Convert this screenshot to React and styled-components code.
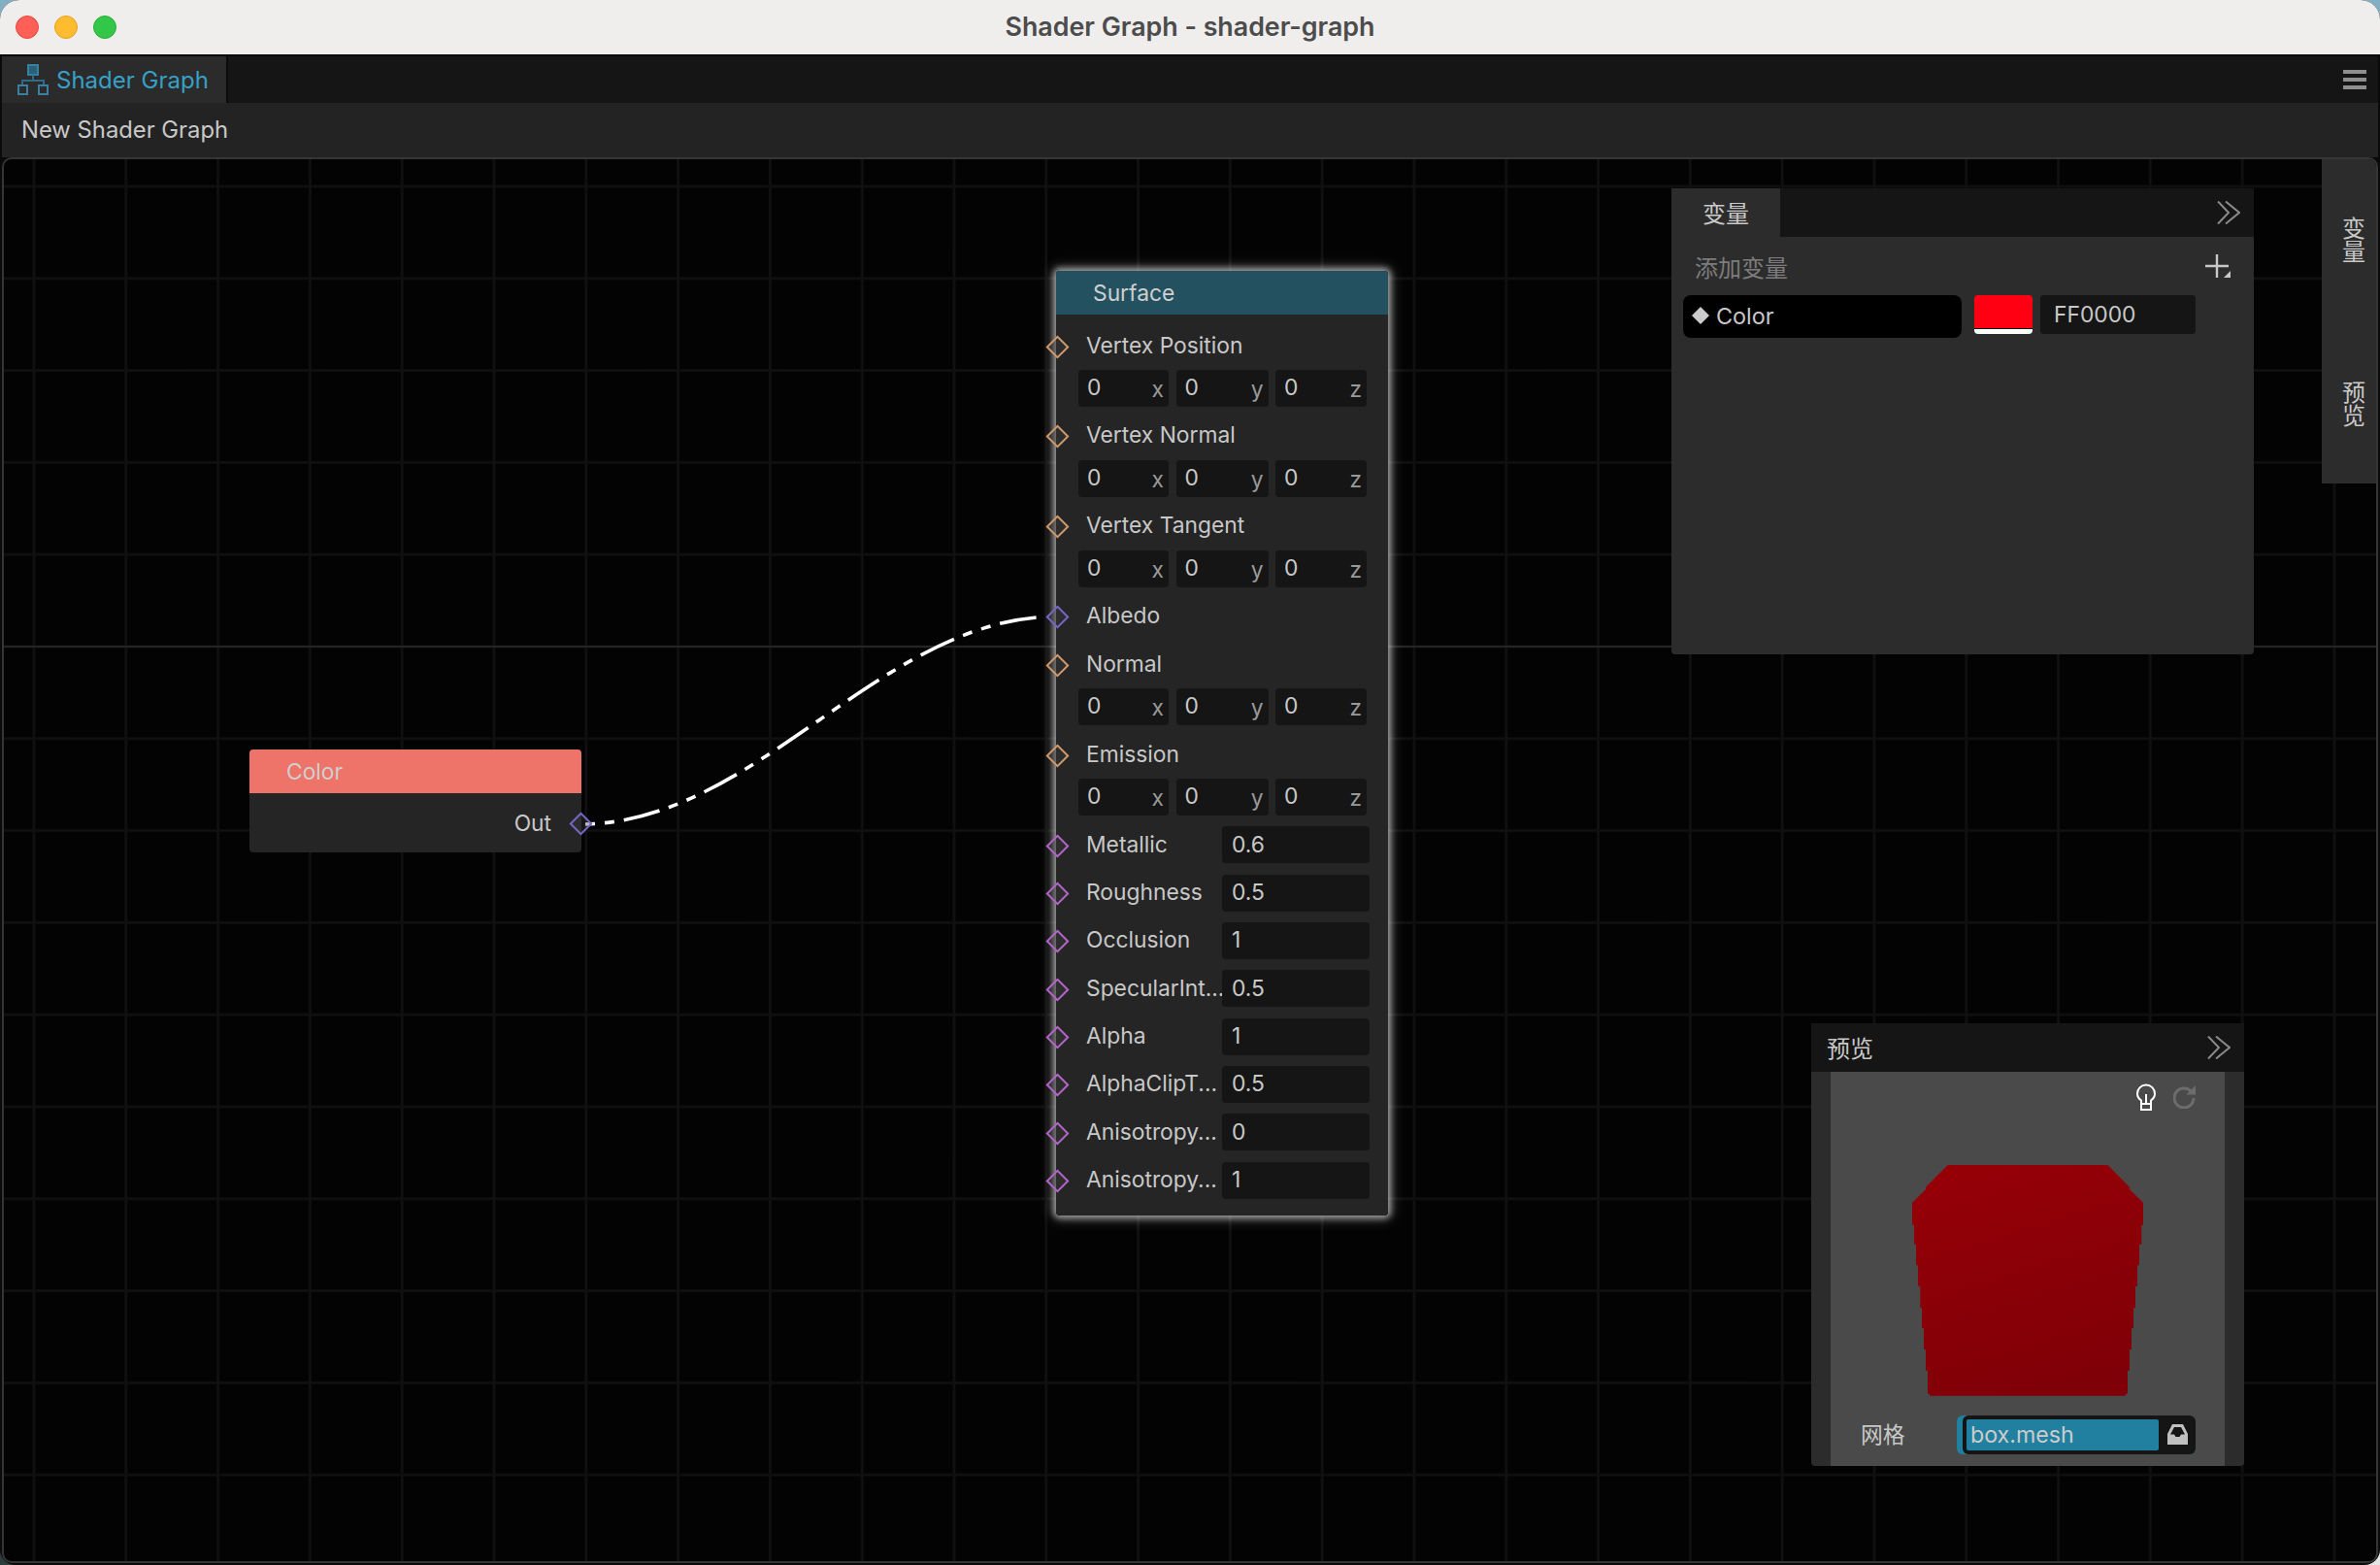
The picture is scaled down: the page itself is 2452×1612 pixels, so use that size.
import React from "react";
import styled, { createGlobalStyle } from "styled-components";

const SANS = `Inter, "Noto Sans CJK SC", sans-serif`;

const GlobalStyle = createGlobalStyle`
  html, body {
    margin: 0;
    padding: 0;
    height: 100%;
    background:
      linear-gradient(to right, #2c3c3a 50%, #e4e6e6 50%) bottom / 100% 50% no-repeat,
      #83aec4;
  }
  * { box-sizing: border-box; }
`;

const Window = styled.div`
  width: 2452px;
  height: 1612px;
  display: flex;
  flex-direction: column;
  background: #0a0a0a;
  border-radius: 20px 20px 16px 16px;
  overflow: hidden;
  font-family: ${SANS};
  font-size: 22.8px;
  color: #c8c8c8;
`;

const TitleBar = styled.div`
  height: 56px;
  flex: none;
  display: grid;
  grid-template-columns: 1fr auto 1fr;
  align-items: center;
  background: #efeeec;
  padding: 0 16px;
`;

const Lights = styled.div`
  display: flex;
  gap: 16px;
`;

const Light = styled.span`
  width: 24px;
  height: 24px;
  border-radius: 50%;
  background: ${(p) => p.$color};
  border: 1px solid ${(p) => p.$edge};
`;

const Title = styled.div`
  font-size: 26.8px;
  font-weight: 600;
  color: #4c4c4c;
  margin-bottom: 2px;
`;

const Workspace = styled.div`
  flex: 1;
  min-height: 0;
  display: flex;
  flex-direction: column;
  padding: 2px;
`;

const TabBar = styled.div`
  height: 48px;
  flex: none;
  display: flex;
  justify-content: space-between;
  align-items: center;
  background: #151515;
  padding-right: 12px;
`;

const Tab = styled.div`
  width: 233px;
  height: 100%;
  display: flex;
  align-items: center;
  gap: 8px;
  padding-left: 16px;
  background: #2b2b2b;
  border-right: 2px solid #0a0a0a;
  color: #38a0c6;
  font-size: 24px;
`;

const Burger = styled.div`
  display: flex;
  flex-direction: column;
  gap: 4px;
  span {
    width: 24px;
    height: 4px;
    background: #8e8e8e;
  }
`;

const Toolbar = styled.div`
  height: 56px;
  flex: none;
  display: flex;
  align-items: center;
  padding: 0 0 2px 20px;
  background: #232323;
  font-size: 23.8px;
`;

const Canvas = styled.div`
  flex: 1;
  min-height: 0;
  position: relative;
  overflow: hidden;
  border: 2px solid #353535;
  border-radius: 10px;
  background-color: #030303;
  background-image:
    linear-gradient(#242424, #242424),
    linear-gradient(to right, #0a0a0a 0, #121212 1px, #121212 2px, #0a0a0a 3px, transparent 3px),
    linear-gradient(to bottom, #0a0a0a 0, #111 1px, #111 2px, #0a0a0a 3px, transparent 3px);
  background-size: 100% 2px, 94.8px 94.8px, 94.8px 94.8px;
  background-position: 0 500.500px, 29.500px 26.500px, 29.500px 26.500px;
  background-repeat: no-repeat, repeat, repeat;
`;

const WireLayer = styled.svg`
  position: absolute;
  left: 0;
  top: 0;
`;

const Node = styled.div`
  position: absolute;
  left: ${(p) => p.$x}px;
  top: ${(p) => p.$y}px;
  width: 342px;
  height: ${(p) => p.$h}px;
  border-radius: 4px;
  background: rgba(38, 38, 38, 0.97);
  ${(p) => p.$selected && "box-shadow: 0 0 6px 3px rgba(255,255,255,.55), 0 0 14px 5px rgba(255,255,255,.2);"}
`;

const NodeHead = styled.div`
  height: 45px;
  display: flex;
  align-items: center;
  padding-left: ${(p) => p.$indent}px;
  border-radius: 4px 4px 0 0;
  background: ${(p) => p.$color};
  color: #cfcfcf;
`;

const NodeBody = styled.div`
  display: flex;
  flex-direction: column;
  gap: 11.33px;
  padding-top: 13px;
`;

const Block = styled.div`
  display: flex;
  flex-direction: column;
  gap: 5.67px;
`;

const Row = styled.div`
  position: relative;
  height: 38px;
  display: flex;
  align-items: center;
  padding-left: 31px;
`;

const Label = styled.span`
  width: 140px;
  flex: none;
  white-space: nowrap;
  margin-bottom: 2px;
`;

const Socket = styled.i`
  position: absolute;
  top: 50%;
  ${(p) => (p.$out ? "right: -7.5px;" : "left: -7.5px;")}
  width: 17px;
  height: 17px;
  margin-top: -7.5px;
  transform: rotate(45deg);
  border: 2px solid ${(p) => p.$color};
  background: rgba(60, 60, 60, 0.35);
`;

const VecRow = styled.div`
  height: 38px;
  margin-left: 23px;
  width: 297px;
  display: grid;
  grid-template-columns: 93px 95px 94px;
  gap: 7.5px;
`;

const Field = styled.div`
  height: 38px;
  display: flex;
  justify-content: space-between;
  align-items: center;
  padding: 0 5px 2px ${(p) => (p.$wide ? "10px" : "9px")};
  border-radius: 4px;
  background: #151515;
  width: ${(p) => (p.$wide ? "152px" : "auto")};
`;

const Axis = styled.span`
  color: #999;
  margin-top: 4px;
`;

const OutRow = styled.div`
  position: relative;
  height: 61px;
  display: flex;
  justify-content: flex-end;
  align-items: center;
  padding-right: 31px;
`;

const SideBar = styled.div`
  position: absolute;
  right: 0;
  top: 0;
  width: 56px;
  height: 334px;
  display: flex;
  flex-direction: column;
  gap: 4px;
  background: #2c2c2c;
`;

const SideTab = styled.div`
  height: 165px;
  display: flex;
  justify-content: center;
  align-items: center;
  padding-left: 6px;
  writing-mode: vertical-rl;
  text-orientation: upright;
  font-size: 24px;
`;

const Panel = styled.div`
  position: absolute;
  left: ${(p) => p.$x}px;
  top: ${(p) => p.$y}px;
  width: ${(p) => p.$w}px;
  height: ${(p) => p.$h}px;
  display: flex;
  flex-direction: column;
  background: #2c2c2c;
  border-radius: 0 0 4px 4px;
`;

const PanelHead = styled.div`
  height: 50px;
  flex: none;
  display: flex;
  justify-content: space-between;
  align-items: center;
  padding-right: 14px;
  background: #151515;
`;

const PanelTab = styled.div`
  width: 112px;
  height: 100%;
  display: flex;
  justify-content: center;
  align-items: center;
  padding-bottom: 2px;
  font-size: 24px;
  background: #2c2c2c;
`;

const PanelTitle = styled.div`
  padding: 0 0 2px 16px;
  font-size: 24px;
`;

const AddRow = styled.div`
  height: 60px;
  display: flex;
  justify-content: space-between;
  align-items: center;
  padding: 0 24px 0 24px;
  font-size: 24px;
  color: #7c7c7c;
`;

const VarRow = styled.div`
  display: flex;
  padding-left: 12px;
`;

const VarName = styled.div`
  width: 287px;
  height: 44px;
  display: flex;
  align-items: center;
  gap: 7px;
  padding: 0 0 2px 9px;
  border-radius: 8px;
  font-size: 23.4px;
  background: #000;
`;

const Diamond = styled.span`
  width: 18px;
  height: 18px;
  background: #ccc;
  clip-path: polygon(50% 0, 100% 50%, 50% 100%, 0 50%);
`;

const Swatch = styled.div`
  width: 60px;
  height: 40px;
  margin-left: 13px;
  border-radius: 4px;
  overflow: hidden;
  background: linear-gradient(#ff0012 34px, #000 34px, #000 35.5px, #fff 35.5px);
`;

const HexInput = styled.div`
  width: 160px;
  height: 40px;
  margin-left: 8px;
  display: flex;
  align-items: center;
  padding: 0 0 2px 14px;
  border-radius: 4px;
  background: #151515;
`;

const PreviewBody = styled.div`
  flex: 1;
  min-height: 0;
  margin: 0 20px;
  display: flex;
  flex-direction: column;
  background: #4a4a4a;
`;

const PreviewTools = styled.div`
  height: 96px;
  flex: none;
  display: flex;
  justify-content: flex-end;
  align-items: flex-start;
  gap: 18px;
  padding: 12px 30px 0 0;
`;

const Cube = styled.svg`
  display: block;
  flex: none;
  margin-left: 84px;
`;

const MeshRow = styled.div`
  display: flex;
  align-items: center;
  margin-top: 20px;
  padding-left: 31px;
`;

const MeshLabel = styled.span`
  width: 99px;
  flex: none;
  padding-bottom: 2px;
`;

const MeshPicker = styled.div`
  width: 246px;
  height: 40px;
  display: flex;
  align-items: center;
  border-radius: 6px;
  background: #21809f;
`;

const MeshInner = styled.div`
  flex: 1;
  height: 40px;
  margin-left: 6px;
  display: flex;
  align-items: center;
  justify-content: space-between;
  padding: 4px 8px 4px 4px;
  border-radius: 6px;
  background: #151515;
`;

const MeshName = styled.div`
  width: 198px;
  height: 32px;
  display: flex;
  align-items: center;
  padding-left: 4px;
  border-radius: 2px;
  background: #21809f;
  font-size: 23.200px;
  color: #ccc;
`;

const ORANGE = "#cf9a6b";
const BLUE = "#7568c6";
const PURPLE = "#b465c9";

const surfaceInputs = [
  { name: "Vertex Position", vec: true },
  { name: "Vertex Normal", vec: true },
  { name: "Vertex Tangent", vec: true },
  { name: "Albedo", color: BLUE },
  { name: "Normal", vec: true },
  { name: "Emission", vec: true },
  { name: "Metallic", value: "0.6" },
  { name: "Roughness", value: "0.5" },
  { name: "Occlusion", value: "1" },
  { name: "SpecularInt...", value: "0.5" },
  { name: "Alpha", value: "1" },
  { name: "AlphaClipT...", value: "0.5" },
  { name: "Anisotropy...", value: "0" },
  { name: "Anisotropy...", value: "1" },
];

const HierarchyIcon = () => (
  <svg width="32" height="32" viewBox="0 0 32 32" fill="none" stroke="#37809f" strokeWidth="2">
    <rect x="11" y="1" width="10" height="10" fill="#2a6079" />
    <path d="M16 11v6M5 22v-5h22v5" stroke="#2f6a86" />
    <rect x="1" y="22" width="9" height="9" />
    <rect x="22" y="22" width="9" height="9" />
  </svg>
);

const Chevrons = () => (
  <svg width="24" height="24" viewBox="0 0 24 24" fill="none" stroke="#8a8a8a" strokeWidth="2">
    <path d="M1 .5 12 12 1 23.5M9 .5 23 12 9 23.5" />
  </svg>
);

const PlusIcon = () => (
  <svg width="26" height="24" viewBox="0 0 26 24">
    <path d="M12 0v24M0 12h24" stroke="#c8c8c8" strokeWidth="2.4" />
    <path d="M26 17v7h-7z" fill="#c8c8c8" />
  </svg>
);

const BulbIcon = () => (
  <svg width="20" height="28" viewBox="0 0 20 28" fill="none" stroke="#fff" strokeWidth="2">
    <path d="M5 21v-3.500C2.600 15.800 1 13.800 1 10.500a9 9 0 0 1 18 0c0 3.300-1.600 5.300-4 7V21" />
    <path d="M10 11v10M5 21h10v6H5z" />
  </svg>
);

const ReloadIcon = () => (
  <svg width="23" height="24" viewBox="0 0 23 24" fill="none" style={{ marginTop: 2 }}>
    <path d="M18.600 6.400A10 10 0 1 0 21 13" stroke="#6c6c6c" strokeWidth="3" />
    <path d="M23 0v9.500h-9.500z" fill="#6c6c6c" />
  </svg>
);

const InboxIcon = () => (
  <svg width="21" height="21" viewBox="0 0 21 21">
    <path
      fillRule="evenodd"
      fill="#c0c0c0"
      d="M5 0h11l5 10v11H0V10zM7 3 3 10.500h4L8.500 13h4l1.500-2.500h4L14 3z"
    />
  </svg>
);

const App = () => {
  return (
    <>
      <GlobalStyle />
      <Window>
        <TitleBar>
          <Lights>
            <Light $color="#ff5f57" $edge="#e5493f" />
            <Light $color="#febc2e" $edge="#e0a028" />
            <Light $color="#33c748" $edge="#2bab3c" />
          </Lights>
          <Title>Shader Graph - shader-graph</Title>
        </TitleBar>
        <Workspace>
          <TabBar>
            <Tab>
              <HierarchyIcon />
              Shader Graph
            </Tab>
            <Burger>
              <span />
              <span />
              <span />
            </Burger>
          </TabBar>
          <Toolbar>New Shader Graph</Toolbar>
          <Canvas>
            {/* svg box stops at the node's glow, which hides the rest of the wire */}
            <WireLayer width="1072" height="1444" viewBox="4 164 1072 1444" fill="none">
              <path
                d="M598 849C780 849 907 635 1089 635"
                stroke="#fff"
                strokeWidth="3.6"
                strokeDasharray="38 10 10 10 10 10"
                strokeDashoffset="43"
              />
            </WireLayer>

            <Node $x={253} $y={608} $h={106}>
              <NodeHead $color="#ee7368" $indent={38}>
                Color
              </NodeHead>
              <OutRow>
                Out
                <Socket $out $color={BLUE} />
              </OutRow>
            </Node>

            <Node $x={1084} $y={115} $h={973} $selected>
              <NodeHead $color="#235160" $indent={38}>
                Surface
              </NodeHead>
              <NodeBody>
                {surfaceInputs.map((input, i) =>
                  input.vec ? (
                    <Block key={i}>
                      <Row>
                        <Label>{input.name}</Label>
                        <Socket $color={ORANGE} />
                      </Row>
                      <VecRow>
                        {["x", "y", "z"].map((axis) => (
                          <Field key={axis}>
                            0<Axis>{axis}</Axis>
                          </Field>
                        ))}
                      </VecRow>
                    </Block>
                  ) : (
                    <Row key={i}>
                      <Label>{input.name}</Label>
                      <Socket $color={input.color || PURPLE} />
                      {input.value && <Field $wide>{input.value}</Field>}
                    </Row>
                  )
                )}
              </NodeBody>
            </Node>

            <Panel $x={1718} $y={30} $w={600} $h={480}>
              <PanelHead>
                <PanelTab>变量</PanelTab>
                <Chevrons />
              </PanelHead>
              <AddRow>
                添加变量
                <PlusIcon />
              </AddRow>
              <VarRow>
                <VarName>
                  <Diamond />
                  Color
                </VarName>
                <Swatch />
                <HexInput>FF0000</HexInput>
              </VarRow>
            </Panel>

            <Panel $x={1862} $y={890} $w={446} $h={456}>
              <PanelHead>
                <PanelTitle>预览</PanelTitle>
                <Chevrons />
              </PanelHead>
              <PreviewBody>
                <PreviewTools>
                  <BulbIcon />
                  <ReloadIcon />
                </PreviewTools>
                <Cube width="238.3" height="237.7" viewBox="360 480 715 713">
                  <defs>
                    <linearGradient id="cubeFill" x1="0.35" y1="0" x2="0.65" y2="1">
                      <stop offset="0" stopColor="#950007" />
                      <stop offset="1" stopColor="#7f0007" />
                    </linearGradient>
                  </defs>
                  <path
                    fill="url(#cubeFill)"
                    d="M470 480H965L1032 548V555L1075 597V665H1069V725H1062V790H1056V855H1050V922H1044V985H1038V1050H1032V1115H1026V1187H1020V1193H414V1187H408V1115H402V1050H396V985H390V922H385V855H378V790H372V725H366V665H360V597L402 555V548Z"
                  />
                </Cube>
                <MeshRow>
                  <MeshLabel>网格</MeshLabel>
                  <MeshPicker>
                    <MeshInner>
                      <MeshName>box.mesh</MeshName>
                      <InboxIcon />
                    </MeshInner>
                  </MeshPicker>
                </MeshRow>
              </PreviewBody>
            </Panel>

            <SideBar>
              <SideTab>变量</SideTab>
              <SideTab>预览</SideTab>
            </SideBar>
          </Canvas>
        </Workspace>
      </Window>
    </>
  );
};

export default App;
